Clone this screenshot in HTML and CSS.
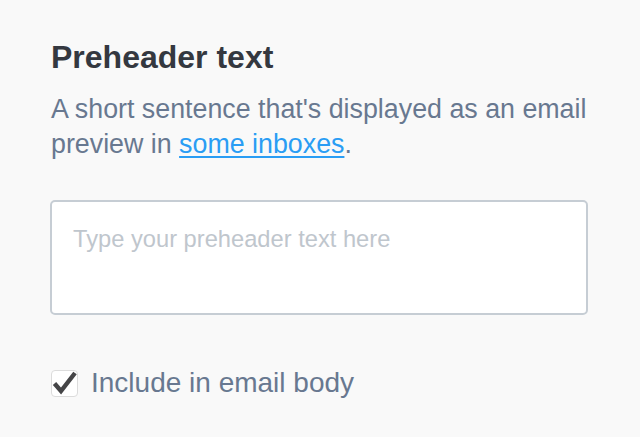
FILE: index.html
```html
<!DOCTYPE html>
<html>
<head>
<meta charset="utf-8">
<link rel="stylesheet" href="styles.css">
</head>
<body>
<div class="panel">
  <h2 class="title">Preheader text</h2>
  <p class="desc">A short sentence that's displayed as an email preview in <a class="link" href="#">some inboxes</a>.</p>
  <div class="field"><span class="placeholder">Type your preheader text here</span></div>
  <label class="check-row">
    <span class="checkbox">
      <svg width="27" height="27" viewBox="0 0 27 27"><path d="M3.5 13.5 L10 21 L24 3" fill="none" stroke="#454547" stroke-width="4.4" stroke-linejoin="miter"/></svg>
    </span>
    <span class="check-label">Include in email body</span>
  </label>
</div>
</body>
</html>
```

FILE: styles.css
```css
html, body {
  margin: 0;
  padding: 0;
  background: #f9f9f9;
  font-family: "Liberation Sans", Arial, Helvetica, sans-serif;
}
.panel {
  width: 538px;
  padding: 38px 0 0 50px;
  display: flex;
  flex-direction: column;
}
.title {
  margin: 0;
  font-size: 32px;
  line-height: 38px;
  font-weight: bold;
  color: #343840;
  padding-left: 1px;
}
.desc {
  margin: 15.5px 0 0 1px;
  font-size: 26.8px;
  line-height: 35px;
  color: #687890;
}
.link {
  color: #2a9df4;
  text-decoration: underline;
  text-underline-offset: 3px;
}
.field {
  margin-top: 38.5px;
  border: 2px solid #c6cdd4;
  border-radius: 5px;
  background: #fff;
  padding: 22.5px 20px 0 21px;
  box-sizing: border-box;
  height: 115px;
}
.placeholder {
  font-size: 23.7px;
  line-height: 28px;
  color: #bfc6cd;
}
.check-row {
  margin-top: 51px;
  display: flex;
  align-items: center;
  gap: 13px;
  padding-left: 1px;
}
.checkbox {
  width: 27px;
  height: 27px;
  box-sizing: border-box;
  border: 1px solid #dcdcdc;
  border-radius: 4px;
  background: #fff;
  position: relative;
  flex: none;
}
.checkbox svg {
  position: absolute;
  left: -1px;
  top: -1px;
}
.check-label {
  font-size: 28px;
  line-height: 34px;
  color: #687890;
}
```
